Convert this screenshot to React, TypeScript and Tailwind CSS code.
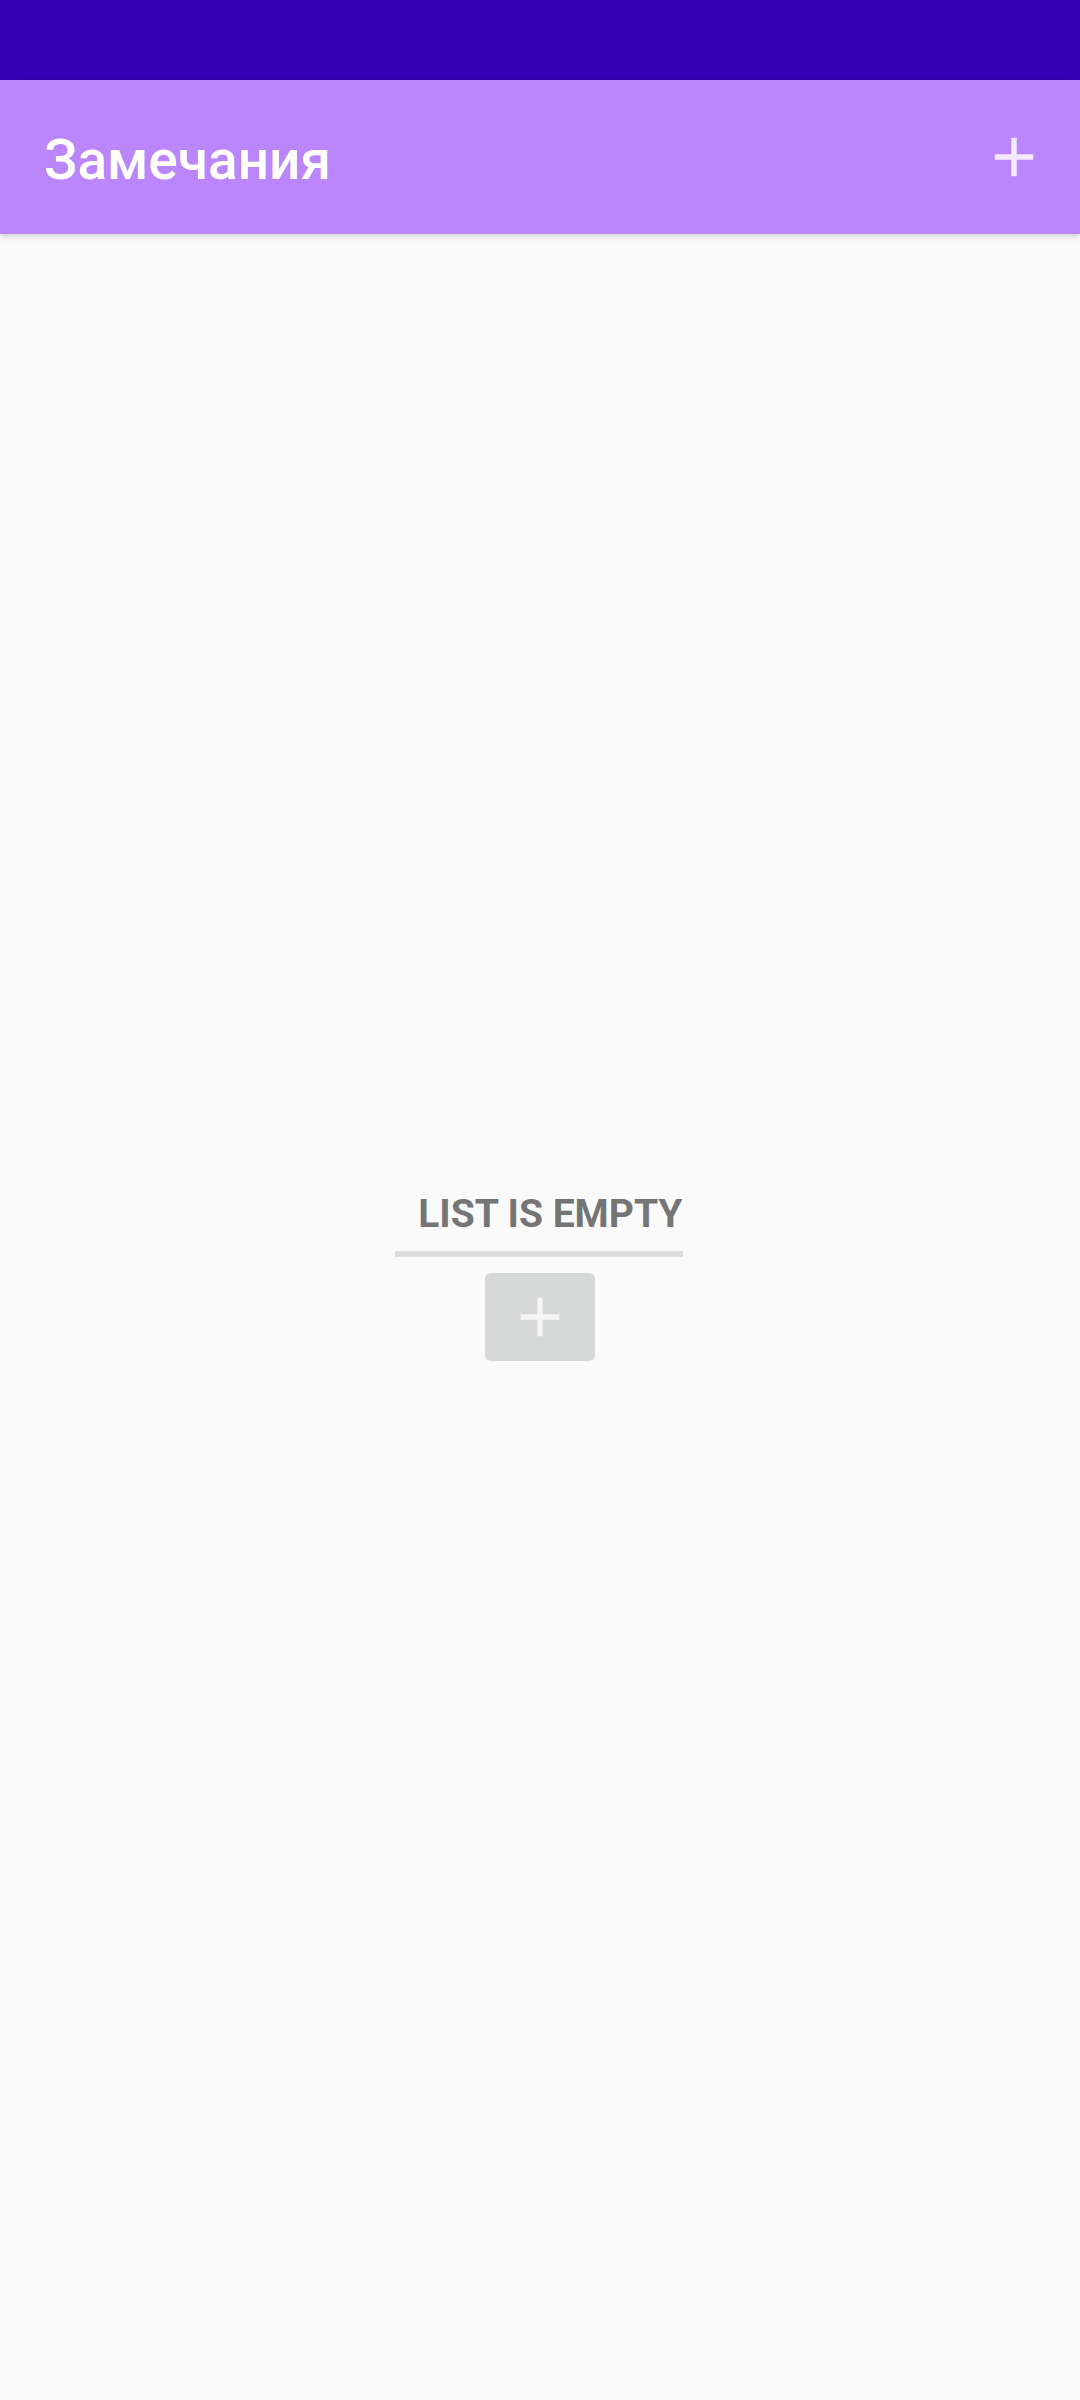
function PlusIcon({ className }: { className?: string }) {
  return (
    <svg viewBox="0 0 24 24" className={className} fill="currentColor">
      <path d="M19 13h-6v6h-2v-6H5v-2h6V5h2v6h6v2z" />
    </svg>
  );
}

export default function App() {
  return (
    <div className="w-[1080px] h-[2400px] bg-[#fafafa] flex flex-col font-['Roboto',sans-serif] overflow-hidden">
      <div className="h-[80px] bg-[#3700b3] shrink-0" />
      <header className="relative z-10 h-[154px] shrink-0 bg-[#bb86fc] flex items-start justify-between shadow-[0_2px_6px_rgba(0,0,0,0.18)]">
        <h1 className="mt-[53px] ml-[44px] text-[55px] leading-none text-white font-medium">Замечания</h1>
        <button className="mt-[44px] mr-[33px] w-[66px] h-[66px] text-[#f3e8fe]" aria-label="Add">
          <PlusIcon className="w-[66px] h-[66px]" />
        </button>
      </header>
      <main className="flex-1 flex flex-col items-center pt-[961px]">
        <div className="w-[288px] mr-[3px] flex flex-col items-center">
          <div className="w-full text-right text-[39px] leading-none font-bold text-[#757575] whitespace-nowrap">
            LIST IS EMPTY
          </div>
          <div className="w-full h-[6px] mt-[17px] bg-[#dddddd]" />
        </div>
        <button className="mt-[16px] w-[110px] h-[88px] rounded-[6px] bg-[#d6d7d7] flex items-center justify-center text-[#f5f5f5]" aria-label="Add item">
          <PlusIcon className="w-[66px] h-[66px]" />
        </button>
      </main>
    </div>
  );
}
